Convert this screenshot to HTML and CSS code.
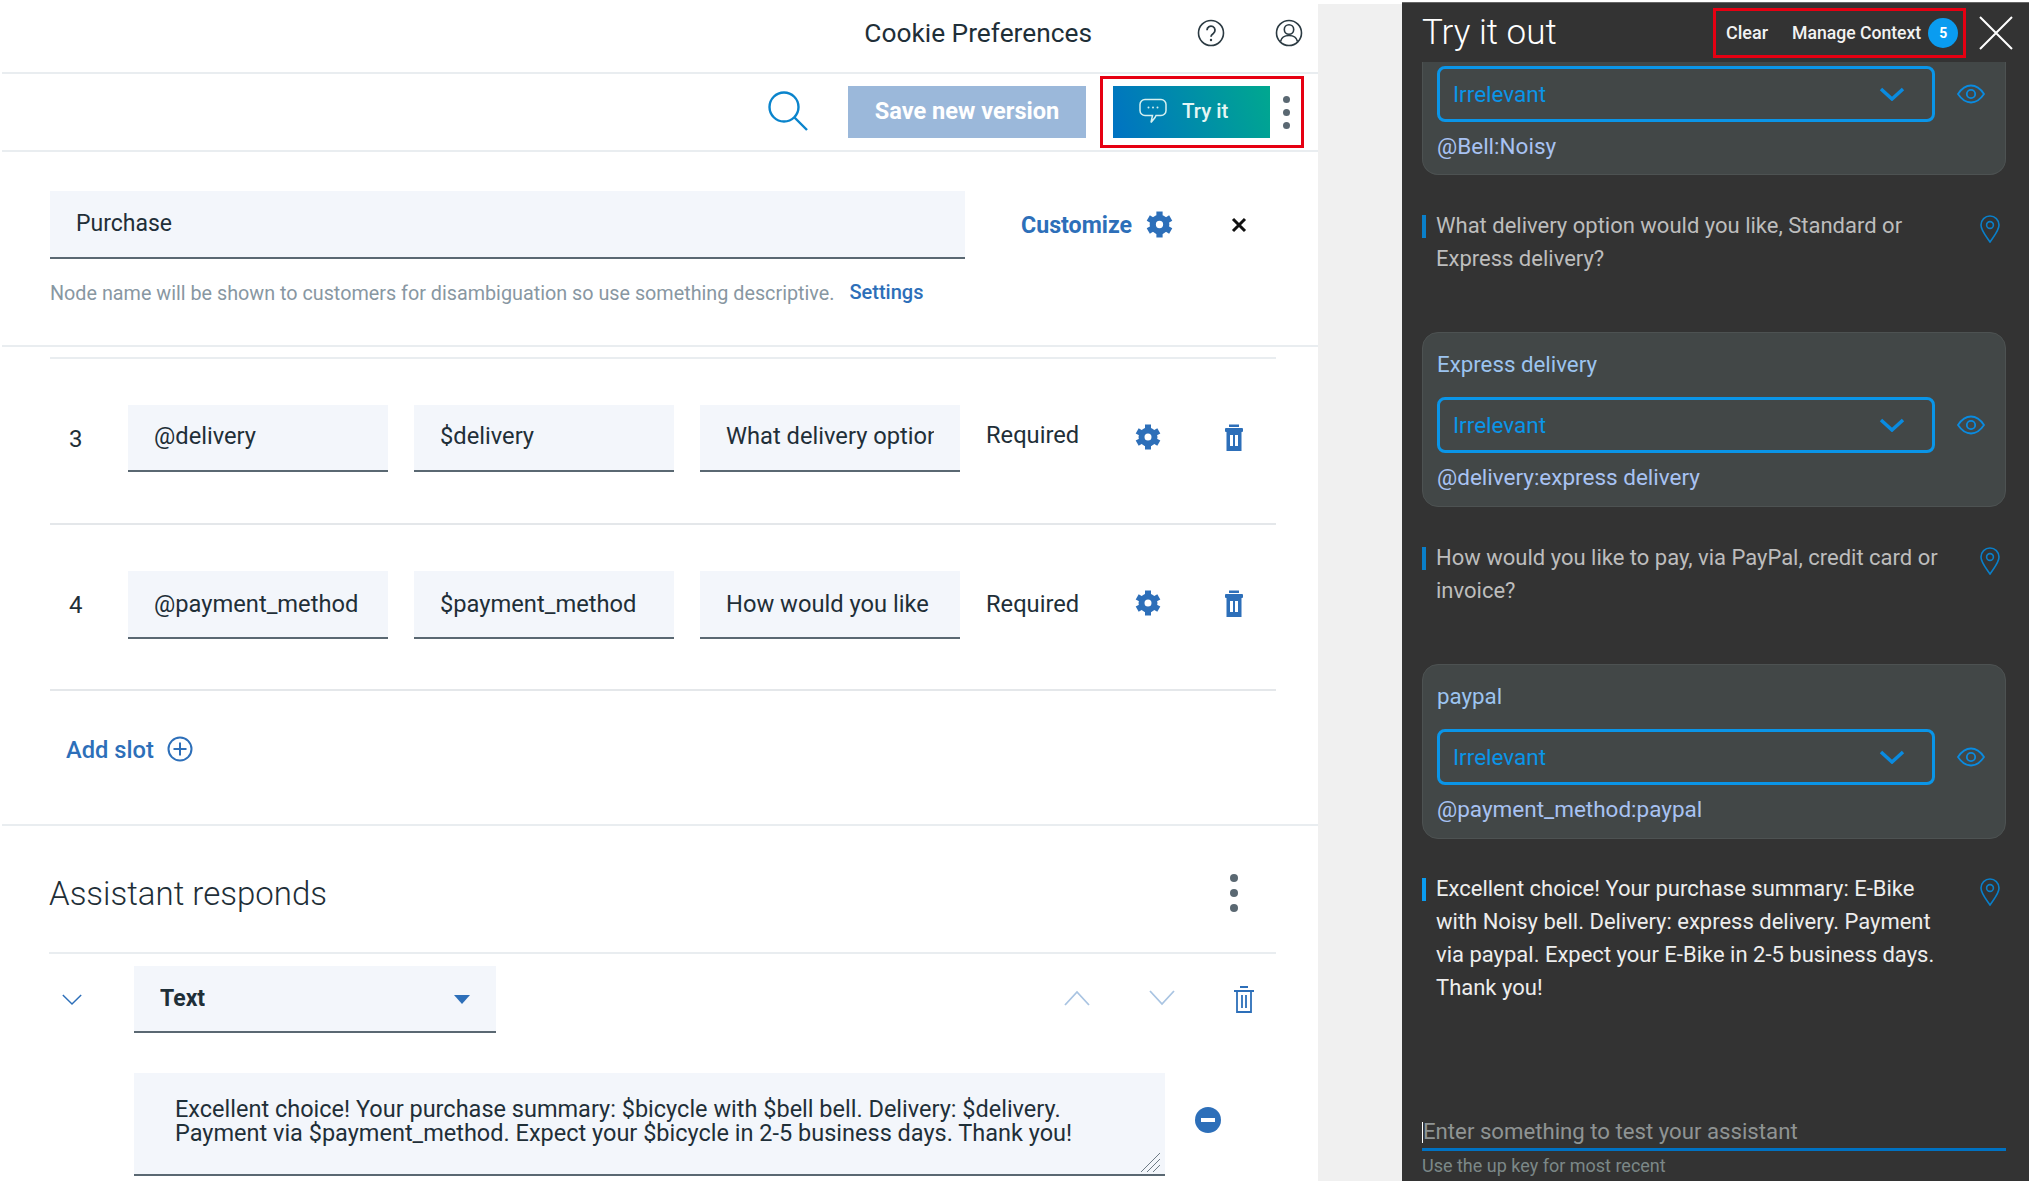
FILE: index.html
```html
<!DOCTYPE html>
<html lang="en">
<head>
    <meta charset="UTF-8">
    <title>Cookie Preferences</title>
    <link rel="stylesheet" href="styles.css">
</head>
<body>
    <svg class="defs" width="0" height="0">
        <symbol id="gear" viewBox="0 0 26 26">
            <circle cx="13" cy="13" r="6.5" fill="none" stroke="currentColor" stroke-width="6"/>
            <g stroke="currentColor" stroke-width="6">
                <line x1="13" y1="5" x2="13" y2="0.5"/>
                <line x1="13" y1="21" x2="13" y2="25.5"/>
                <line x1="20" y1="9" x2="23.8" y2="6.8"/>
                <line x1="6" y1="17" x2="2.2" y2="19.2"/>
                <line x1="20" y1="17" x2="23.8" y2="19.2"/>
                <line x1="6" y1="9" x2="2.2" y2="6.8"/>
            </g>
        </symbol>
        <symbol id="trash" viewBox="0 0 20 27">
            <rect x="5" y="0.5" width="10" height="2.5" fill="currentColor"/>
            <rect x="1" y="4" width="18" height="4" rx="1" fill="currentColor"/>
            <path fill="currentColor" fill-rule="evenodd" d="M2.5 8h15v19h-15zM6 11v11h3V11zM11 11v11h3V11z"/>
        </symbol>
        <symbol id="pin" viewBox="0 0 20 28">
            <path fill="none" stroke="currentColor" stroke-width="1.6" d="M10 27C6 21 1 15.500 1 10a9 9 0 0 1 18 0c0 5.500-5 11-9 17z"/>
            <circle cx="10" cy="10" r="3.400" fill="none" stroke="currentColor" stroke-width="1.6"/>
        </symbol>
        <symbol id="eye" viewBox="0 0 28 20">
            <path fill="none" stroke="currentColor" stroke-width="1.800" d="M1 10C5 4 9 1.500 14 1.500S23 4 27 10c-4 6-8 8.500-13 8.500S5 16 1 10z"/>
            <circle cx="14" cy="10" r="4.200" fill="none" stroke="currentColor" stroke-width="1.800"/>
        </symbol>
        <symbol id="chev" viewBox="0 0 26 14">
            <path fill="none" stroke="currentColor" stroke-width="3.500" d="M2 2l11 10L24 2"/>
        </symbol>
    </svg>

    <div class="app">
        <div class="editor">
            <div class="topbar">
                <h1 class="page-title">Cookie Preferences</h1>
                <svg class="top-icon help-icon" viewBox="0 0 28 28">
                    <circle cx="14" cy="14" r="12.500" fill="none" stroke="#2b3a42" stroke-width="1.600"/>
                    <path fill="none" stroke="#2b3a42" stroke-width="1.800" d="M10 11.200a4 4 0 1 1 6.300 3.200c-1.500 1-2.300 1.700-2.300 3.300"/>
                    <circle cx="14" cy="21" r="1.200" fill="#2b3a42"/>
                </svg>
                <svg class="top-icon" viewBox="0 0 28 28">
                    <circle cx="14" cy="14" r="12.500" fill="none" stroke="#2b3a42" stroke-width="1.600"/>
                    <circle cx="14" cy="10.500" r="4.700" fill="none" stroke="#2b3a42" stroke-width="1.600"/>
                    <path fill="none" stroke="#2b3a42" stroke-width="1.600" d="M5.500 22.500c1-4.500 4-6 8.500-6s7.500 1.500 8.500 6"/>
                </svg>
            </div>

            <div class="toolbar">
                <svg class="search-icon" viewBox="0 0 40 40">
                    <circle cx="16" cy="16" r="14.500" fill="none" stroke="#0a84cc" stroke-width="2.400"/>
                    <path stroke="#0a84cc" stroke-width="2.400" d="M26.500 26.500L39 39"/>
                </svg>
                <button class="save-btn" type="button">Save new version</button>
                <div class="try-box">
                    <button class="try-btn" type="button">
                        <svg class="chat-icon" viewBox="0 0 28 26">
                            <path fill="none" stroke="#d5f0f0" stroke-width="1.500" d="M6 1.500h16a5 5 0 0 1 5 5v6a5 5 0 0 1-5 5h-5l-1 2-4 5 1.500-7H6a5 5 0 0 1-5-5v-6a5 5 0 0 1 5-5z"/>
                            <circle cx="9.500" cy="9.500" r="1" fill="#d5f0f0"/>
                            <circle cx="14" cy="9.500" r="1" fill="#d5f0f0"/>
                            <circle cx="18.500" cy="9.500" r="1" fill="#d5f0f0"/>
                        </svg>
                        Try it
                    </button>
                    <div class="dots dots-small"><i></i><i></i><i></i></div>
                </div>
            </div>

            <div class="name-section">
                <div class="name-row">
                    <div class="field name-field"><span>Purchase</span></div>
                    <a class="customize">Customize</a>
                    <svg class="gear gear-customize"><use href="#gear"/></svg>
                    <svg class="close-x" viewBox="0 0 16 16">
                        <path stroke="#111" stroke-width="3" d="M2 2l12 12M14 2L2 14"/>
                    </svg>
                </div>
                <div class="hint-row">
                    <span class="hint">Node name will be shown to customers for disambiguation so use something descriptive.</span>
                    <a class="settings">Settings</a>
                </div>
            </div>

            <div class="slots">
                <div class="slot">
                    <div class="slot-num">3</div>
                    <div class="field slot-field"><span>@delivery</span></div>
                    <div class="field slot-field"><span>$delivery</span></div>
                    <div class="field slot-field"><span>What delivery option</span></div>
                    <div class="required">Required</div>
                    <svg class="gear"><use href="#gear"/></svg>
                    <svg class="trash"><use href="#trash"/></svg>
                </div>
                <div class="slot">
                    <div class="slot-num">4</div>
                    <div class="field slot-field"><span>@payment_method</span></div>
                    <div class="field slot-field"><span>$payment_method</span></div>
                    <div class="field slot-field"><span>How would you like t</span></div>
                    <div class="required">Required</div>
                    <svg class="gear"><use href="#gear"/></svg>
                    <svg class="trash"><use href="#trash"/></svg>
                </div>
                <div class="add-slot">
                    <a>Add slot</a>
                    <svg class="plus-icon" viewBox="0 0 26 26">
                        <circle cx="13" cy="13" r="11.500" fill="none" stroke="#2d6fb9" stroke-width="2"/>
                        <path stroke="#2d6fb9" stroke-width="2" d="M13 6.500v13M6.500 13h13"/>
                    </svg>
                </div>
            </div>

            <div class="responds">
                <div class="responds-head">
                    <h2>Assistant responds</h2>
                    <div class="dots"><i></i><i></i><i></i></div>
                </div>
                <div class="response-row">
                    <svg class="thin-chev chev-toggle" viewBox="0 0 24 14">
                        <path fill="none" stroke="#2d6fb9" stroke-width="1.600" d="M2 2l10 10L22 2"/>
                    </svg>
                    <div class="field type-select">
                        <span>Text</span>
                        <i class="caret"></i>
                    </div>
                    <svg class="thin-chev chev-up" viewBox="0 0 28 16">
                        <path fill="none" stroke="#a9c4e2" stroke-width="1.800" d="M2 15L14 2l12 13"/>
                    </svg>
                    <svg class="thin-chev chev-down" viewBox="0 0 28 16">
                        <path fill="none" stroke="#a9c4e2" stroke-width="1.800" d="M2 1l12 13L26 1"/>
                    </svg>
                    <svg class="trash-outline" viewBox="0 0 20 27">
                        <path stroke="#2d6fb9" stroke-width="1.800" d="M6 1h8M0 5h20"/>
                        <path fill="none" stroke="#2d6fb9" stroke-width="1.800" d="M3 5v21h14V5M8 9v13M12 9v13"/>
                    </svg>
                </div>
                <div class="response-text-row">
                    <div class="response-text">
                        Excellent choice! Your purchase summary: $bicycle with $bell bell. Delivery: $delivery.<br>
                        Payment via $payment_method. Expect your $bicycle in 2-5 business days. Thank you!
                        <svg class="resize" viewBox="0 0 20 20">
                            <path stroke="#6d7b85" stroke-width="1" d="M1 20L20 1M7 20L20 7M13 20l7-7"/>
                        </svg>
                    </div>
                    <div class="minus-icon"><i></i></div>
                </div>
            </div>
        </div>

        <div class="gutter"></div>

        <div class="try-panel">
            <div class="try-head">
                <div class="try-title">Try it out</div>
                <div class="context-box">
                    <span>Clear</span>
                    <span class="manage">Manage Context</span>
                    <span class="badge">5</span>
                </div>
                <svg class="try-close" viewBox="0 0 34 34">
                    <path stroke="#fff" stroke-width="2" d="M1 1l32 32M33 1L1 33"/>
                </svg>
            </div>

            <div class="try-body">
                <div class="card card-cut">
                    <div class="select-row">
                        <div class="intent-select"><span>Irrelevant</span><svg class="chev"><use href="#chev"/></svg></div>
                        <svg class="eye"><use href="#eye"/></svg>
                    </div>
                    <div class="entity">@Bell:Noisy</div>
                </div>
                <div class="msg">
                    <i class="msg-bar"></i>
                    <p>What delivery option would you like, Standard or Express delivery?</p>
                    <svg class="pin"><use href="#pin"/></svg>
                </div>
                <div class="card">
                    <div class="card-title">Express delivery</div>
                    <div class="select-row">
                        <div class="intent-select"><span>Irrelevant</span><svg class="chev"><use href="#chev"/></svg></div>
                        <svg class="eye"><use href="#eye"/></svg>
                    </div>
                    <div class="entity">@delivery:express delivery</div>
                </div>
                <div class="msg">
                    <i class="msg-bar"></i>
                    <p>How would you like to pay, via PayPal, credit card or invoice?</p>
                    <svg class="pin"><use href="#pin"/></svg>
                </div>
                <div class="card">
                    <div class="card-title">paypal</div>
                    <div class="select-row">
                        <div class="intent-select"><span>Irrelevant</span><svg class="chev"><use href="#chev"/></svg></div>
                        <svg class="eye"><use href="#eye"/></svg>
                    </div>
                    <div class="entity">@payment_method:paypal</div>
                </div>
                <div class="msg msg-last">
                    <i class="msg-bar"></i>
                    <p>Excellent choice! Your purchase summary: E-Bike with Noisy bell. Delivery: express delivery. Payment via paypal. Expect your E-Bike in 2-5 business days. Thank you!</p>
                    <svg class="pin"><use href="#pin"/></svg>
                </div>
            </div>

            <div class="try-foot">
                <div class="try-input">Enter something to test your assistant</div>
                <div class="try-help">Use the up key for most recent</div>
            </div>
        </div>
    </div>
</body>
</html>
```

FILE: styles.css
```css
* {
    box-sizing: border-box;
}

body {
    margin: 0;
    background-color: #fff;
    font-family: Roboto, "Liberation Sans", sans-serif;
    color: #1f2f38;
}

h1, h2, p {
    margin: 0;
    font-weight: 400;
}

.defs {
    display: block;
    height: 0;
}

.app {
    display: flex;
    height: 1183px;
    overflow: hidden;
}

.editor {
    width: 1318px;
    flex: none;
    background-color: #fff;
}

.gutter {
    width: 84px;
    flex: none;
    margin: 4px 0 2px;
    background-color: #f0f0f0;
}

.try-panel {
    width: 627px;
    flex: none;
    margin: 2px 0;
    display: flex;
    flex-direction: column;
    background-color: #333;
    border-top: 1px solid #666;
}

/* top bars */
.topbar {
    height: 74px;
    margin-left: 2px;
    padding: 0 15px 7px 0;
    display: flex;
    align-items: center;
    justify-content: flex-end;
    border-bottom: 2px solid #e9edf0;
}

.page-title {
    font-size: 26.300px;
    margin-right: 105px;
}

.top-icon {
    width: 28px;
    height: 28px;
}

.help-icon {
    margin-right: 50px;
}

.toolbar {
    height: 78px;
    margin-left: 2px;
    padding-right: 14px;
    display: flex;
    align-items: center;
    justify-content: flex-end;
    border-bottom: 2px solid #e9edf0;
}

.search-icon {
    width: 40px;
    height: 40px;
    margin: -3px 40px 0 0;
}

.save-btn {
    width: 238px;
    height: 52px;
    margin-right: 14px;
    padding: 0 0 2px;
    border: none;
    background-color: #9bb8da;
    color: #fff;
    font: 700 23.600px Roboto, sans-serif;
}

.try-box {
    width: 204px;
    height: 72px;
    padding-left: 10px;
    display: flex;
    align-items: center;
    border: 3px solid #e60012;
}

.try-btn {
    width: 157px;
    height: 52px;
    padding: 0 0 2px 26px;
    display: flex;
    align-items: center;
    gap: 15px;
    border: none;
    background: linear-gradient(70deg, #0072c3 0%, #00a88f 100%);
    color: #e4f6f4;
    font: 500 20.500px Roboto, sans-serif;
}

.chat-icon {
    width: 28px;
    height: 26px;
}

.dots {
    display: flex;
    flex-direction: column;
    gap: 7px;
}

.dots i {
    width: 8px;
    height: 8px;
    border-radius: 50%;
    background-color: #5a6872;
}

.dots-small {
    margin-left: 13px;
    gap: 6px;
}

.dots-small i {
    width: 7px;
    height: 7px;
}

/* inputs */
.field {
    background-color: #f3f6fb;
    border-bottom: 2px solid #5a6872;
    font-size: 23.700px;
    color: #1f2f38;
}

.field span {
    display: block;
    overflow: hidden;
    white-space: nowrap;
}

.name-section {
    height: 195px;
    padding: 39px 0 0 50px;
    border-bottom: 2px solid #e9edf0;
    margin-left: 2px;
}

.name-row {
    display: flex;
    align-items: center;
    margin-left: -2px;
}

.name-field {
    width: 915px;
    height: 68px;
    padding: 19px 26px 0;
    font-size: 23px;
}

.customize {
    margin-left: 56px;
    font-size: 23.200px;
    font-weight: 700;
    color: #2d6fb9;
}

.gear {
    width: 26px;
    height: 26px;
    color: #2d6fb9;
    flex: none;
}

.gear-customize {
    width: 27px;
    height: 27px;
    margin-left: 14px;
    margin-top: -1px;
}

.close-x {
    width: 16px;
    height: 16px;
    margin: -1px 0 0 58px;
}

.hint-row {
    display: flex;
    align-items: flex-start;
    margin: 23px 0 0 -2px;
}

.hint {
    font-size: 19.770px;
    color: #8897a2;
}

.settings {
    margin: -2px 0 0 15px;
    font-size: 20px;
    font-weight: 500;
    color: #2d6fb9;
}

/* slots */
.slots {
    margin: 10px 42px 0 50px;
    border-top: 2px solid #e9edf0;
}

.slot {
    height: 166px;
    padding-top: 46px;
    display: flex;
    align-items: flex-start;
    border-bottom: 2px solid #e4e7ea;
}

.slot-num {
    width: 78px;
    padding: 20px 0 0 19px;
    font-size: 24px;
    flex: none;
}

.slot-field {
    width: 260px;
    height: 67px;
    margin-right: 26px;
    padding: 17px 26px 0;
}

.slot + .slot .slot-field {
    height: 68px;
    padding-top: 19px;
}

.required {
    width: 149px;
    margin-top: 16px;
    font-size: 23.700px;
    flex: none;
}

.slot + .slot .required {
    margin-top: 19px;
}

.slot .gear {
    margin-top: 19px;
}

.trash {
    width: 20px;
    height: 27px;
    margin: 19px 0 0 63px;
    color: #2d6fb9;
    flex: none;
}

.add-slot {
    height: 133px;
    padding: 45px 0 0 16px;
    display: flex;
    align-items: flex-start;
    gap: 13px;
    color: #2d6fb9;
    font-size: 23.700px;
    font-weight: 500;
}

.plus-icon {
    width: 26px;
    height: 26px;
}

/* response */
.responds {
    margin-left: 2px;
    padding: 0 42px 0 47px;
    border-top: 2px solid #e9edf0;
}

.responds-head {
    height: 128px;
    display: flex;
    align-items: center;
    justify-content: space-between;
    padding: 8px 38px 0 0;
    border-bottom: 2px solid #e9edf0;
}

.responds-head h2 {
    font-size: 33px;
    font-weight: 300;
}

.response-row {
    height: 119px;
    padding-top: 12px;
    display: flex;
    align-items: flex-start;
}

.thin-chev {
    flex: none;
}

.chev-toggle {
    width: 22px;
    height: 13px;
    margin: 27px 51px 0 12px;
}

.type-select {
    width: 362px;
    height: 67px;
    padding: 19px 26px 0;
    display: flex;
    justify-content: space-between;
    font-size: 23px;
}

.type-select span {
    font-weight: 700;
}

.caret {
    width: 0;
    height: 0;
    margin: 10px 0 0;
    border-left: 8px solid transparent;
    border-right: 8px solid transparent;
    border-top: 9px solid #2d6fb9;
}

.chev-up {
    width: 28px;
    height: 16px;
    margin: 24px 0 0 567px;
}

.chev-down {
    width: 28px;
    height: 16px;
    margin: 24px 0 0 57px;
}

.trash-outline {
    width: 20px;
    height: 27px;
    margin: 20px 0 0 58px;
    flex: none;
}

.response-text-row {
    display: flex;
    align-items: center;
    margin-left: 85px;
}

.response-text {
    position: relative;
    width: 1031px;
    height: 103px;
    padding: 24px 41px 0;
    background-color: #f3f6fb;
    border-bottom: 2px solid #5a6872;
    font-size: 23.500px;
    line-height: 24px;
    white-space: nowrap;
}

.resize {
    position: absolute;
    right: 5px;
    bottom: 2px;
    width: 20px;
    height: 20px;
}

.minus-icon {
    width: 26px;
    height: 26px;
    margin: -10px 0 0 30px;
    display: flex;
    align-items: center;
    justify-content: center;
    border-radius: 50%;
    background-color: #2d6fb9;
}

.minus-icon i {
    width: 14px;
    height: 4px;
    background-color: #fff;
}

/* try it out panel */
.try-head {
    height: 59px;
    padding-left: 20px;
    display: flex;
    align-items: center;
    flex: none;
}

.try-title {
    width: 291px;
    font-size: 35px;
    font-weight: 300;
    color: #fff;
}

.context-box {
    width: 253px;
    height: 50px;
    padding-left: 10px;
    display: flex;
    align-items: center;
    border: 3px solid #e60012;
    color: #f2f2f2;
    font-size: 18px;
    font-weight: 500;
    white-space: nowrap;
}

.manage {
    margin-left: 24px;
    font-size: 17.600px;
}

.badge {
    width: 30px;
    height: 30px;
    margin-left: 7px;
    flex: none;
    display: flex;
    align-items: center;
    justify-content: center;
    border-radius: 50%;
    background-color: #0a9cf0;
    color: #fff;
    font-size: 14px;
    font-weight: 700;
}

.try-close {
    width: 34px;
    height: 34px;
    margin-left: 13px;
}

.try-body {
    flex: 1;
    min-height: 0;
    padding: 0 23px 0 20px;
    overflow: hidden;
}

.card {
    padding: 16px 14px 13px;
    background-color: #424747;
    border: 1px solid #4d5252;
    border-radius: 16px;
}

.card-cut {
    padding: 4px 14px 12px;
    border-top: none;
    border-radius: 0 0 16px 16px;
}

.card-title {
    height: 30px;
    margin-bottom: 18px;
    font-size: 22.300px;
    line-height: 30px;
    color: #9cc4f0;
}

.select-row {
    display: flex;
    align-items: center;
}

.intent-select {
    width: 498px;
    height: 56px;
    padding: 0 27px 0 13px;
    display: flex;
    align-items: center;
    justify-content: space-between;
    border: 3px solid #0a95e8;
    border-radius: 8px;
    color: #0a95e8;
    font-size: 22.500px;
}

.chev {
    width: 26px;
    height: 14px;
    color: #0a8be0;
}

.eye {
    width: 28px;
    height: 20px;
    margin-left: 22px;
    color: #0a8be0;
}

.entity {
    height: 32px;
    margin-top: 8px;
    font-size: 22.500px;
    line-height: 32px;
    color: #a8c2f2;
}

.msg {
    margin: 34px 0 57px;
    display: flex;
    align-items: flex-start;
}

.msg p {
    width: 512px;
    font-size: 22px;
    line-height: 33px;
    color: #bdbdbd;
}

.msg-bar {
    width: 4px;
    height: 23px;
    margin: 6px 10px 0 0;
    flex: none;
    background-color: #0a7fc9;
}

.pin {
    width: 20px;
    height: 28px;
    margin: 6px 0 0 32px;
    flex: none;
    color: #0a7fc9;
}

.msg-last {
    margin-top: 33px;
}

.msg-last p {
    color: #ededed;
}

.msg-last .msg-bar {
    background-color: #0a9cf0;
}

.try-foot {
    flex: none;
    padding: 0 23px 0 20px;
}

.try-input {
    height: 21px;
    margin-bottom: 5px;
    border-left: 1px solid #fff;
    font-size: 22.200px;
    line-height: 18px;
    color: #8f9494;
}

.try-help {
    height: 33px;
    border-top: 3px solid #0072c3;
    font-size: 18px;
    line-height: 30px;
    color: #7c8888;
}
```
